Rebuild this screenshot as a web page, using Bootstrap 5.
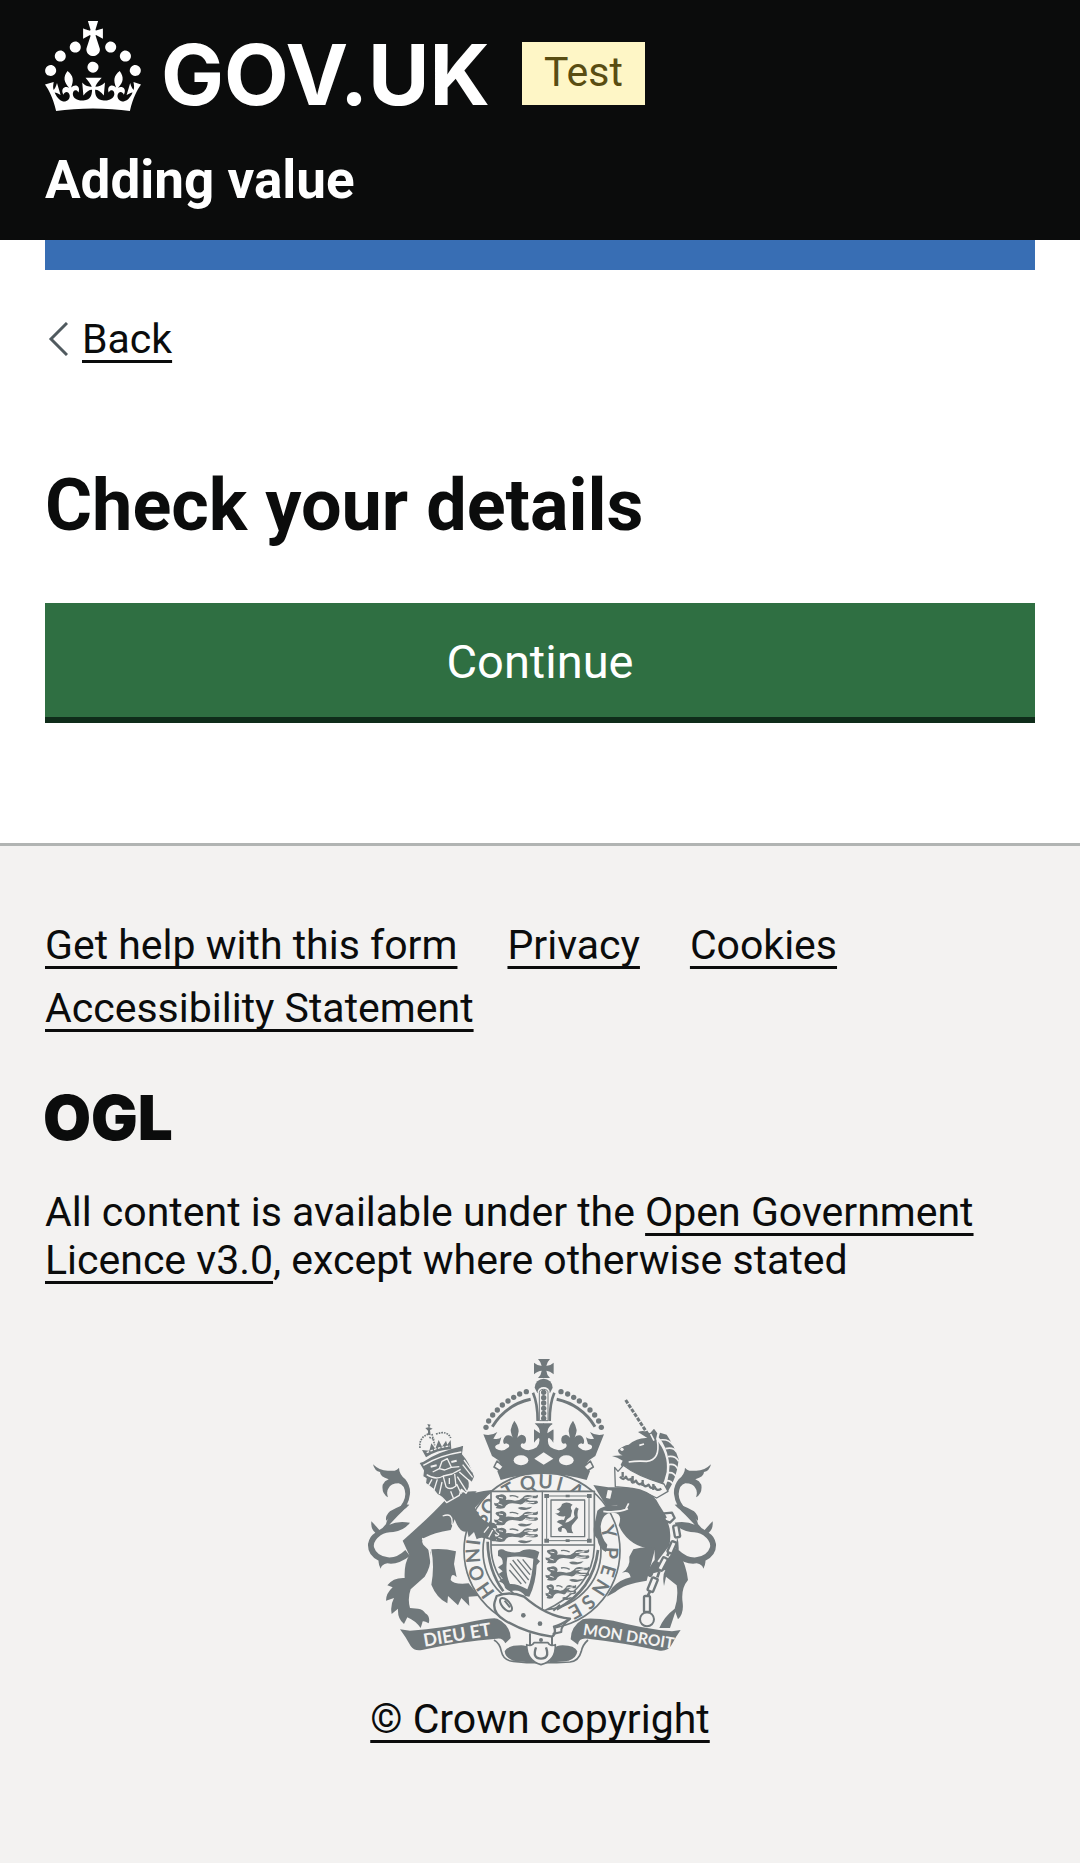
<!DOCTYPE html>
<html lang="en">
<head>
<meta charset="utf-8">
<meta name="viewport" content="width=device-width, initial-scale=1">
<title>Check your details - Adding value - GOV.UK</title>
<link href="https://cdn.jsdelivr.net/npm/bootstrap@5.3.0/dist/css/bootstrap.min.css" rel="stylesheet">
<style>
  body { font-family: Roboto, "Liberation Sans", sans-serif; font-size: 41px; line-height: 48px; color: #0b0c0c; background: #fff; }
  .gutter { padding-left: 45px; padding-right: 45px; }
  .site-head { background: #0b0c0c; padding-top: 21px; padding-bottom: 33px; }
  .logo-row { gap: 33px; margin-bottom: 42px; }
  .gov-logo, .ogl-mark { overflow: visible; }
  .gov-logo text { font: 700 84px Inter, Roboto, sans-serif; }
  .phase-tag { background: #fef6c6; color: #594d12; height: 63px; line-height: 60px; padding: 0 22px; margin-bottom: 6px; }
  .service-name { font-size: 53px; line-height: 54px; font-weight: 700; color: #fff; }
  .blue-bar { height: 30px; background: #386eb4; }
  a.ulink { color: #0b0c0c; text-decoration: underline; text-decoration-thickness: 3px; text-underline-offset: 7px; text-decoration-skip-ink: none; }
  .back-row { margin-top: 45px; gap: 14px; padding-left: 3px; }
  .page-title { font-size: 72px; line-height: 75px; font-weight: 700; margin: 105px 0 60px; }
  .btn-go { background: #2f6f42; color: #fff; font-size: 47px; line-height: 57px; padding: 30px 24px 27px; border: 0; border-radius: 0; box-shadow: 0 6px 0 #0f2c1a; margin-bottom: 126px; }
  .btn-go:hover { background: #265a36; color: #fff; }
  .site-foot { background: #f3f2f1; border-top: 3px solid #b1b4b3; padding-top: 75px; padding-bottom: 120px; }
  .foot-links { column-gap: 50px; row-gap: 15px; margin-bottom: 60px; }
  .ogl-mark { margin-bottom: 46px; }
  .ogl-mark text { font: 900 62px Inter, sans-serif; fill: #0b0c0c; }
  .licence { margin-bottom: 66px; }
  .crest { margin-bottom: 25px; }
  .crest text { font-family: Lato, sans-serif; font-weight: 700; }
</style>
<script src="https://cdn.jsdelivr.net/npm/bootstrap@5.3.0/dist/js/bootstrap.bundle.min.js"></script>
</head>
<body>
<header class="site-head gutter">
  <div class="logo-row d-flex align-items-end">
    <a href="#" aria-label="GOV.UK" class="d-block">
      <svg class="gov-logo d-block" width="444" height="90" viewBox="0 0 444 90" fill="#fff">
        <path transform="scale(3)" d="M22.6 10.4c-1 .4-2-.1-2.4-1-.4-.9.1-2 1-2.4.9-.4 2 .1 2.4 1s-.1 2-1 2.4m-5.9 6.7c-.9.4-2-.1-2.4-1-.4-.9.1-2 1-2.4.9-.4 2 .1 2.4 1s-.1 2-1 2.4m10.8-3.7c-1 .4-2-.1-2.4-1-.4-.9.1-2 1-2.4.9-.4 2 .1 2.4 1s0 2-1 2.4m3.3 4.8c-1 .4-2-.1-2.4-1-.4-.9.1-2 1-2.4.9-.4 2 .1 2.4 1s-.1 2-1 2.4M17 4.7l2.3 1.2V2.5l-2.3.7-.2-.2.9-3h-3.4l.9 3-.2.2c-.1.1-2.3-.7-2.3-.7v3.4L15 4.7c.1.1.1.2.2.2l-1.3 4c-.1.2-.1.4-.1.6 0 1.1.8 2 1.9 2.2h.7c1-.2 1.9-1.1 1.9-2.1 0-.2 0-.4-.1-.6l-1.3-4c-.1-.2 0-.2.1-.3m-7.6 5.7c.9.4 2-.1 2.4-1 .4-.9-.1-2-1-2.4-.9-.4-2 .1-2.4 1s0 2 1 2.4m-5 3c.9.4 2-.1 2.4-1 .4-.9-.1-2-1-2.4-.9-.4-2 .1-2.4 1s.1 2 1 2.4m-3.2 4.8c.9.4 2-.1 2.4-1 .4-.9-.1-2-1-2.4-.9-.4-2 .1-2.4 1s0 2 1 2.4m14.8 11c4.4 0 8.6.3 12.3.8 1.1-4.5 2.4-7 3.7-8.8l-2.5-.9c.2 1.3.3 1.9 0 2.7-.4-.4-.8-1.1-1.1-2.3l-1.2 4c.7-.5 1.3-.8 2-.9-1.1 2.5-2.6 3.1-3.5 3-1.1-.2-1.7-1.2-1.5-2.1.3-1.2 1.5-1.5 2.1-.1 1.1-2.3-.8-3-2-2.3 1.9-1.9 2.1-3.5.6-5.6-2.1 1.6-2.1 3.2-1.2 5.5-1.2-1.4-3.2-.6-2.5 1.6.9-1.4 2.1-.5 1.9.8-.2 1.1-1.7 2.1-3.5 1.9-2.7-.2-2.9-2.1-2.9-3.6.7-.1 1.9.5 2.9 1.9l.4-4.3c-1.1 1.1-2.1 1.4-3.2 1.4.4-1.2 2.1-3 2.1-3h-5.4s1.7 1.9 2.1 3c-1.1 0-2.1-.2-3.2-1.4l.4 4.3c1-1.4 2.2-2 2.9-1.9-.1 1.5-.2 3.4-2.9 3.6-1.9.2-3.4-.8-3.5-1.9-.2-1.3 1-2.2 1.9-.8.7-2.3-1.2-3-2.5-1.6.9-2.2.9-3.9-1.2-5.5-1.5 2-1.3 3.7.6 5.6-1.2-.7-3.1 0-2 2.3.6-1.4 1.8-1.1 2.1.1.2.9-.3 1.9-1.5 2.1-.9.2-2.4-.5-3.5-3 .6 0 1.2.3 2 .9l-1.2-4c-.3 1.1-.7 1.9-1.1 2.3-.3-.8-.2-1.4 0-2.7l-2.9.9C1.3 23 2.6 25.5 3.7 30c3.7-.5 7.9-.8 12.3-.8"/>
        <text x="116" y="84">GOV.UK</text>
      </svg>
    </a>
    <span class="phase-tag">Test</span>
  </div>
  <div class="service-name">Adding value</div>
</header>

<div class="gutter">
  <div class="blue-bar"></div>
  <div class="back-row d-flex align-items-center">
    <svg width="20" height="34" viewBox="0 0 20 34" fill="none" stroke="#505a5f" stroke-width="3"><path d="M19 1 3 17l16 16"/></svg>
    <a class="ulink" href="#">Back</a>
  </div>
  <main>
    <h1 class="page-title">Check your details</h1>
    <button type="button" class="btn btn-go w-100 d-block">Continue</button>
  </main>
</div>

<footer class="site-foot gutter">
  <ul class="foot-links list-unstyled d-flex flex-wrap">
    <li><a class="ulink" href="#">Get help with this form</a></li>
    <li><a class="ulink" href="#">Privacy</a></li>
    <li><a class="ulink" href="#">Cookies</a></li>
    <li><a class="ulink" href="#">Accessibility Statement</a></li>
  </ul>
  <svg class="ogl-mark d-block" width="130" height="50" viewBox="0 0 130 50" role="img" aria-label="Open Government Licence"><text x="-2" y="48">OGL</text></svg>
  <p class="licence">All content is available under the <a class="ulink" href="#">Open Government Licence v3.0</a>, except where otherwise stated</p>
  <div class="text-center">
    <svg class="crest d-block mx-auto" width="368" height="320" viewBox="-12 0 1104 960" fill="#70787b" stroke-linejoin="round">
      <defs>
        <g id="tail">
          <path d="M39 343Q62 366 92 362Q110 364 117 353Q117 372 136 388Q152 408 150 432Q146 470 115 496L88 524Q112 512 150 518Q132 542 100 546Q78 546 62 556Q38 574 42 592Q50 618 84 622Q112 624 136 600L150 618Q112 646 82 640Q64 644 62 656Q54 640 56 632Q22 616 24 582Q28 558 46 548Q32 538 34 514Q48 528 58 540Q68 536 78 522Q82 500 110 482Q136 456 136 432Q134 404 116 400Q92 400 86 414Q78 424 84 442Q64 430 68 404Q74 392 86 388Q60 380 60 366Q44 364 39 343Z"/>
          <path d="M78 512Q76 496 90 484Q130 460 148 464Q128 486 112 488Z"/>
        </g>
        <g id="passant">
          <path d="M4 10Q2 2 14 3Q26-2 34 6Q38 12 34 18Q46 16 62 20Q76 20 84 12Q92 0 108 4Q122 8 130 2Q134 14 120 13Q104 10 98 17Q108 22 128 20Q136 27 124 30Q106 32 90 25Q84 34 72 30Q50 26 42 30Q36 32 30 42Q18 46 4 42L8 36Q-2 36 0 26Q8 30 14 24Q18 18 10 16Z"/>
          <path d="M70 42Q78 36 96 41L114 38Q108 45 96 47Q80 50 70 42Z"/>
          <path d="M46 6Q60 3 72 10" fill="none" stroke="#70787b" stroke-width="4"/>
          <path d="M90 12Q104 10 116 9M92 24Q106 28 120 25M12 30 24 34M14 10 26 12" fill="none" stroke="#f3f2f1" stroke-width="3"/>
        </g>
        <g id="crownhalf">
          <circle cx="378" cy="232" r="8"/><circle cx="386" cy="213" r="8"/><circle cx="398" cy="195" r="8"/><circle cx="412" cy="180" r="8"/><circle cx="427" cy="165" r="8"/><circle cx="444" cy="153" r="8"/><circle cx="461" cy="142" r="8"/><circle cx="479" cy="132" r="8"/><circle cx="499" cy="125" r="8"/>
          <path d="M397 230Q438 164 512 148" fill="none" stroke="#70787b" stroke-width="9"/>
          <path d="M519 128Q533 160 533 213" fill="none" stroke="#70787b" stroke-width="8"/>
          <path d="M370 253Q392 260 412 246L400 266Q416 270 424 262L418 282Q400 286 408 296Q428 308 446 292Q452 284 438 280Q428 286 430 270Q436 250 454 258Q462 264 464 278Q452 250 452 240Q454 226 463 212Q476 230 476 244Q474 262 466 278Q470 258 484 254Q500 256 498 272Q496 284 486 280Q478 286 486 294Q506 308 530 292Q540 282 538 266Q530 254 522 270V238L540 250Q540 232 524 220H552V372Q480 372 422 390L412 364Q430 345 414 330L396 318Z"/>
          <ellipse cx="483" cy="331" rx="22" ry="15" fill="#f3f2f1"/>
          <path d="M411 333 430 350 420 362 402 351Z" fill="#f3f2f1" stroke="#70787b" stroke-width="5"/>
        </g>
      </defs>

      <!-- garter ring -->
      <path d="M310 440Q345 425 395 420L330 490ZM700 405 745 412 790 412 800 460 740 470Z"/>
      <circle cx="546" cy="602" r="234" fill="#f3f2f1" stroke="#70787b" stroke-width="5"/>
      <circle cx="546" cy="602" r="177" fill="none" stroke="#70787b" stroke-width="5"/>
      <path d="M383 575Q384 660 430 724" fill="none" stroke="#70787b" stroke-width="8"/>
      <path d="M714 600Q700 720 590 778" fill="none" stroke="#70787b" stroke-width="8"/>
      <g font-size="58" text-anchor="middle">
        <text x="546" y="415" transform="rotate(235 546 602)">H</text><text x="546" y="415" transform="rotate(251 546 602)">O</text><text x="546" y="415" transform="rotate(266 546 602)">N</text><text x="546" y="415" transform="rotate(277 546 602)">I</text>
        <text x="546" y="415" transform="rotate(298 546 602)">S</text><text x="546" y="415" transform="rotate(310 546 602)">O</text><text x="546" y="415" transform="rotate(331 546 602)">T</text>
        <text x="546" y="415" transform="rotate(348 546 602)">Q</text><text x="546" y="415" transform="rotate(3 546 602)">U</text><text x="546" y="415" transform="rotate(15 546 602)">I</text><text x="546" y="415" transform="rotate(30 546 602)">A</text>
        <text x="546" y="415" transform="rotate(74 546 602)">Y</text><text x="546" y="415" transform="rotate(92 546 602)">P</text><text x="546" y="415" transform="rotate(107 546 602)">E</text><text x="546" y="415" transform="rotate(122 546 602)">N</text><text x="546" y="415" transform="rotate(138 546 602)">S</text><text x="546" y="415" transform="rotate(151 546 602)">E</text>
      </g>

      <!-- shield -->
      <path d="M393 424H703V590Q700 716 547 785Q396 716 393 590Z" fill="#f3f2f1" stroke="#70787b" stroke-width="5"/>
      <path d="M547 424V785M393 585H703" stroke="#70787b" stroke-width="4"/>
      <use href="#passant" x="403" y="432"/><use href="#passant" x="403" y="482"/><use href="#passant" x="403" y="532"/>
      <use href="#passant" x="557" y="596"/><use href="#passant" x="557" y="648"/><use href="#passant" transform="translate(557 702) scale(.7 1)"/>
      <g fill="none" stroke="#70787b"><rect x="560" y="438" width="127" height="134" stroke-width="3"/><rect x="573" y="450" width="101" height="110" stroke-width="4"/></g>
      <path d="M553 432h14v12h-14zM681 432h14v12h-14zM553 566h14v12h-14zM681 566h14v12h-14zM617 434h12v8h-12zM617 568h12v8h-12z"/>
      <path d="M585 490Q598 492 600 484L590 478Q604 474 606 462Q620 452 638 464Q628 470 636 482L632 500Q618 508 616 518Q634 514 644 500Q638 484 648 472L656 476Q650 488 654 504L636 526Q632 540 640 550L622 548Q618 532 606 534L604 546Q592 546 594 534L608 526L590 516Q596 508 612 510L616 498Q600 504 585 490Z"/>
      <path d="M414 602Q424 594 436 602Q470 614 490 600Q520 594 538 606L532 626 540 634 530 646Q528 700 508 740L496 738Q478 716 452 724Q430 718 434 702L416 694 428 686 416 672 428 664 414 652 428 642Q430 622 414 618Z"/>
      <path d="M442 622Q480 616 520 626Q518 680 502 718Q470 700 450 702Q434 670 442 622Z" fill="#f3f2f1"/>
      <path d="M450 640 498 700M458 630 506 690M472 628 510 674M488 628 514 660M448 660 484 702" stroke="#70787b" stroke-width="4"/>

      <!-- royal crown -->
      <path d="M534 27H570Q560 38 559 47Q570 48 581 38V73Q570 62 559 62Q560 74 570 84H534Q544 74 545 62Q534 62 522 73V38Q534 48 545 47Q544 38 534 27Z"/>
      <path d="M524 113a27 27 0 1 1 54 0l-8 16H532Z"/>
      <path d="M533 213V126a18 15 0 0 1 36 0V213Z" fill="#f3f2f1"/>
      <use href="#crownhalf"/><use href="#crownhalf" transform="translate(1102) scale(-1 1)"/>
      <path d="M538 212V128a13 10 0 0 1 26 0V212Z" fill="none" stroke="#70787b" stroke-width="3"/>
      <g><circle cx="551" cy="127" r="8"/><circle cx="551" cy="143" r="8"/><circle cx="551" cy="159" r="8"/><circle cx="551" cy="175" r="8"/><circle cx="551" cy="190" r="8"/><circle cx="551" cy="205" r="8"/></g>
      <path d="M551 307 580 326 551 344 523 326Z" fill="#f3f2f1"/>
      <path d="M522 278Q534 262 543 262Q546 232 526 222H578Q556 232 559 262Q570 262 580 278V240Q568 254 551 254Q534 254 522 240Z"/>

      <!-- lion supporter -->
      <use href="#tail"/>
      <path d="M254 452Q210 500 128 572L148 616Q132 640 134 684Q100 682 82 706L98 712Q78 730 78 752L102 744Q90 766 95 792L114 776Q112 806 132 822L142 802Q166 812 182 834L187 818Q186 808 206 820Q212 800 196 790Q190 778 174 776L150 774Q142 746 152 718L194 680Q216 644 212 606L190 584Q182 572 192 564Q222 548 272 540L284 508Q300 552 322 544L326 562 342 546 350 568Q364 556 398 574L410 574 404 552 416 556 398 534 412 536Q412 516 386 518Q366 512 352 486L330 450 350 424Q300 420 254 452Z"/>
      <path d="M214 598Q250 594 288 604L282 642 290 682Q274 664 272 690Q280 704 326 700L356 738 326 740 328 768 304 744 294 766 264 738 262 760Q230 744 214 704Q224 650 214 598Z"/>
      <path d="M186 566Q206 572 206 588L214 640" fill="none" stroke="#f3f2f1" stroke-width="5"/>
      <path d="M248 498Q280 486 276 522L290 540M386 530 372 548M398 540 386 562" fill="none" stroke="#f3f2f1" stroke-width="4"/>
      <path d="M176 338 188 334Q236 302 300 288L312 284 308 312Q330 336 344 380L336 398 326 390Q334 410 318 430L304 418 298 436 260 458Q246 440 232 434L218 416 196 400 198 386 188 380 190 362Z" stroke="#f3f2f1" stroke-width="4"/>
      <g fill="none" stroke="#f3f2f1" stroke-width="4">
        <path d="M190 346Q240 316 304 306M238 356 246 334 262 326 274 352 254 360ZM238 356 218 366M274 352 298 350M200 374Q228 392 250 378L276 372 302 358M250 380 258 410Q270 422 288 408L284 372M268 384V402M216 388 206 406M232 388 222 420M246 396 238 432M298 366 332 396M292 380 320 424M290 402 304 432M272 424 280 444M312 330 338 366M308 344 338 382"/>
      </g>
      <path d="M212 350 230 346M274 336 290 332" stroke="#f3f2f1" stroke-width="6"/>
      <path d="M186 300 198 322Q230 300 274 298L272 270 262 284 258 272 246 290 236 270 226 296 214 280 208 302Z"/>
      <path d="M200 308Q232 292 270 288" fill="none" stroke="#f3f2f1" stroke-width="4" stroke-dasharray="8 4"/>
      <path d="M180 294Q176 262 206 252M208 262 224 268M228 252Q262 240 272 264M216 252 224 286" fill="none" stroke="#70787b" stroke-width="5" stroke-dasharray="5 3"/>
      <path d="M196 234 206 232 202 222 212 224 208 232 218 236 210 240 212 256 204 254 204 242Z"/>

      <!-- unicorn supporter -->
      <use href="#tail" transform="translate(1092) scale(-1 1)"/>
      <path d="M797 150 862 250" fill="none" stroke="#70787b" stroke-width="9" stroke-dasharray="12 4"/>
      <path d="M834 246Q852 238 870 250L882 236 892 250 888 268Q926 310 920 366Q914 392 906 408Q860 394 798 362L800 350Q784 354 782 344L788 332Q772 322 756 318L788 316Q774 312 774 300Q790 286 806 284Q832 262 862 264Z"/>
      <path d="M900 248 920 254Q944 290 956 328Q952 380 924 424L914 420Q934 360 926 330Q918 286 896 262Z"/>
      <path d="M900 270Q926 266 940 286M916 296Q940 290 950 306M924 320Q946 316 956 334M926 344Q946 340 954 358M926 368Q942 366 950 384M920 392Q936 392 940 406" fill="none" stroke="#f3f2f1" stroke-width="5"/>
      <path d="M892 270Q902 330 860 334Q830 332 806 336M838 286l14-4M872 252l10 20" fill="none" stroke="#f3f2f1" stroke-width="5"/>
      <circle cx="786" cy="298" r="5" fill="#f3f2f1"/>
      <path d="M764 352 774 364 790 346Q830 378 912 402L924 424 890 444Q830 412 766 410Z" fill="#f3f2f1" stroke="#70787b" stroke-width="4"/>
      <path d="M780 380q10 14 18 0q4 14 16 6q0 20 14 6q8 18 20 6q4 18 18 6q6 16 18 6q6 16 20 6M788 366v16M818 378v18M848 390v18M880 402v18" fill="none" stroke="#70787b" stroke-width="7"/>
      <path d="M758 420Q790 404 840 418Q884 432 898 466Q918 494 934 530Q958 554 956 602Q980 650 984 690Q962 716 968 758Q972 790 954 808L946 786 930 834H898Q912 800 944 776Q956 740 950 706L918 680 912 708Q906 676 916 660L880 670Q874 690 862 676Q866 650 884 630V600L856 594Q800 580 776 526Q790 490 760 488Q726 486 722 530Q724 566 742 584L738 606Q716 596 712 566Q698 556 702 530L712 482Q726 466 772 466Z"/>
      <path d="M820 598Q856 588 886 594L860 692Q790 702 766 726L740 740 756 714Q780 688 812 682Q808 660 786 668Q812 652 808 620Z"/>
      <path d="M730 484Q770 490 804 476M796 480 806 460" fill="none" stroke="#f3f2f1" stroke-width="5"/>
      <path d="M924 500Q948 530 938 590L900 640" fill="none" stroke="#f3f2f1" stroke-width="20"/>
      <g fill="none" stroke="#70787b" stroke-width="7">
        <path d="M904 508 912 490 936 488 944 504 930 518Z"/>
        <rect x="-8" y="-18" width="16" height="36" rx="4" transform="translate(950 544) rotate(-10)" fill="#f3f2f1"/><rect x="-8" y="-18" width="16" height="36" rx="4" transform="translate(936 592) rotate(24)" fill="#f3f2f1"/><rect x="-8" y="-20" width="16" height="40" rx="4" transform="translate(908 642) rotate(28)" fill="#f3f2f1"/><rect x="-9" y="-21" width="18" height="42" rx="4" transform="translate(878 704) rotate(22)"/><rect x="-9" y="-24" width="18" height="48" rx="4" transform="translate(861 762)"/>
        <path d="M922 618 926 608M892 682 898 664M864 736 870 724" stroke-width="8"/>
        <circle cx="861" cy="808" r="21" stroke-width="6"/>
        <rect x="738" y="418" width="18" height="30" rx="4" stroke-width="5" fill="#f3f2f1" transform="rotate(12 747 433)"/>
      </g>

      <!-- belt, buckle and motto ribbons -->
      <path d="M410 738Q450 722 492 740Q560 800 630 806Q600 826 582 830Q590 850 576 860Q500 850 436 812Q396 790 404 756Z" fill="#f3f2f1" stroke="#70787b" stroke-width="7"/>
      <ellipse cx="438" cy="764" rx="12" ry="24" transform="rotate(-40 438 764)" fill="none" stroke="#70787b" stroke-width="6"/>
      <path d="M434 752 450 772M580 782 600 764" stroke="#70787b" stroke-width="6"/>
      <circle cx="490" cy="796" r="7"/><circle cx="540" cy="821" r="7"/>
      <path d="M630 806Q600 830 604 846L578 852M510 850V888M576 858V888" fill="none" stroke="#70787b" stroke-width="6"/>
      <circle cx="543" cy="870" r="6"/>
      <path d="M402 870Q420 880 424 904Q430 932 460 934L500 938H590L630 936Q656 934 664 904Q668 884 684 870" fill="none" stroke="#70787b" stroke-width="5"/>
      <path d="M434 904Q442 886 484 886Q500 886 506 896L520 938 460 932Q436 924 434 904ZM652 904Q644 886 608 886Q590 886 582 896L568 938 626 932Q650 924 652 904Z"/>
      <path d="M500 884Q516 890 522 878H564Q570 890 586 884Q588 932 543 944Q500 932 500 884Z" fill="#f3f2f1" stroke="#70787b" stroke-width="5"/>
      <path d="M528 892Q516 926 543 926Q570 926 558 892" fill="none" stroke="#70787b" stroke-width="7"/>
      <path d="M120 838 150 842Q250 836 340 814Q400 802 412 806Q450 824 452 864L436 880Q428 862 410 866Q300 874 186 900Q162 904 152 888Q138 862 120 838Z"/>
      <path d="M962 840 936 844Q850 836 760 812Q690 802 668 808Q632 830 632 868L654 884Q656 862 684 866Q790 878 900 902Q924 904 934 886Q946 862 962 840Z"/>
      <path id="mottoL" d="M194 890Q300 872 430 850" fill="none"/><path id="mottoR" d="M668 854Q790 872 960 900" fill="none"/>
      <g fill="#f3f2f1"><text font-size="54"><textPath href="#mottoL">DIEU ET</textPath></text><text font-size="47"><textPath href="#mottoR">MON DROIT</textPath></text></g>
    </svg>
    <a class="ulink" href="#">© Crown copyright</a>
  </div>
</footer>
</body>
</html>
